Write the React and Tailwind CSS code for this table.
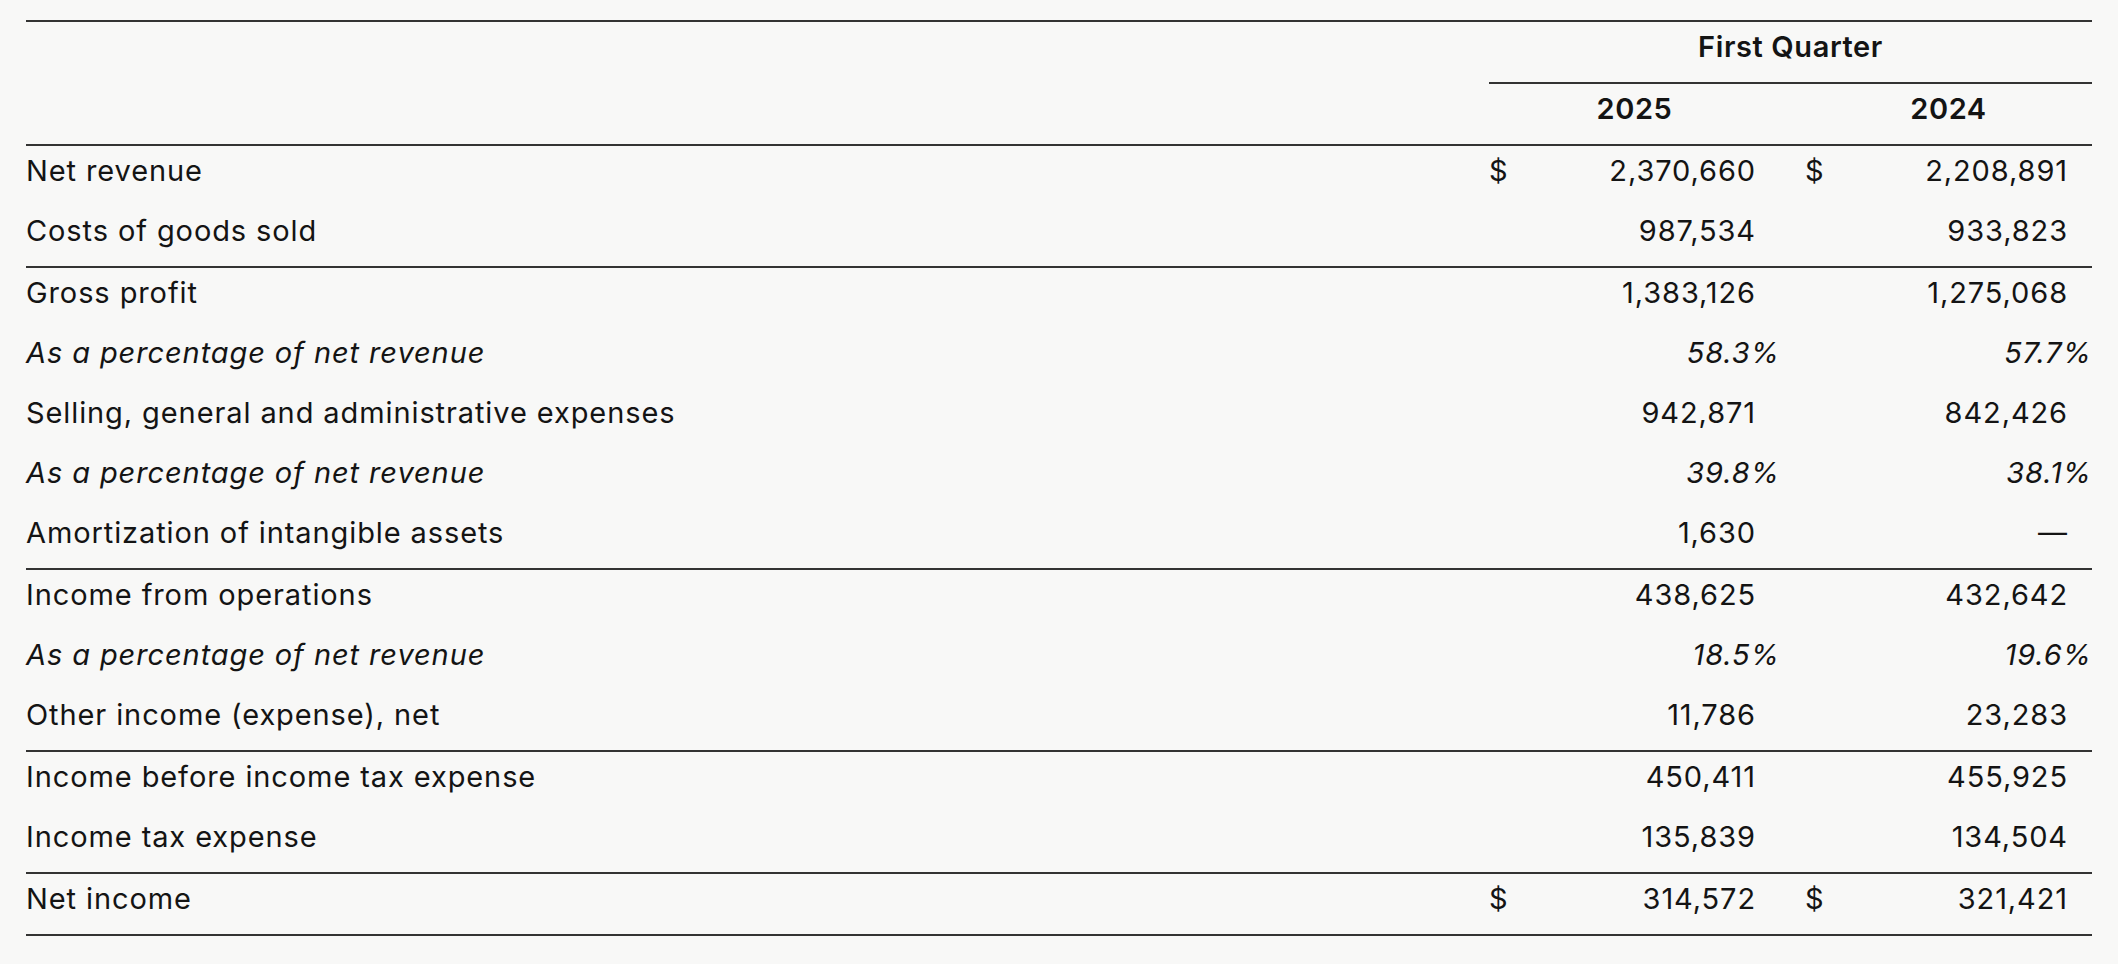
import React from "react";

const rows = [
  { label: "Net revenue", a: "2,370,660", b: "2,208,891", dollar: true },
  { label: "Costs of goods sold", a: "987,534", b: "933,823" },
  { label: "Gross profit", a: "1,383,126", b: "1,275,068", border: true },
  { label: "As a percentage of net revenue", a: "58.3%", b: "57.7%", pct: true },
  { label: "Selling, general and administrative expenses", a: "942,871", b: "842,426" },
  { label: "As a percentage of net revenue", a: "39.8%", b: "38.1%", pct: true },
  { label: "Amortization of intangible assets", a: "1,630", b: "—" },
  { label: "Income from operations", a: "438,625", b: "432,642", border: true },
  { label: "As a percentage of net revenue", a: "18.5%", b: "19.6%", pct: true },
  { label: "Other income (expense), net", a: "11,786", b: "23,283" },
  { label: "Income before income tax expense", a: "450,411", b: "455,925", border: true },
  { label: "Income tax expense", a: "135,839", b: "134,504" },
  { label: "Net income", a: "314,572", b: "321,421", dollar: true, border: true },
];

function ValueCell({ value, dollar, pct, width }) {
  return (
    <div className={`flex items-center ${width}`}>
      <span className="w-[30px]">{dollar ? "$" : ""}</span>
      <span
        className={`flex-1 text-right ${pct ? "italic pr-0" : "pr-[24px]"}`}
      >
        {value}
      </span>
    </div>
  );
}

function Row({ row }) {
  return (
    <div
      className={`flex items-center pb-[11px] ${
        row.border ? "h-[62px] border-t-2 border-[#333]" : "h-[60px]"
      }`}
    >
      <div className={`flex-1 ${row.pct ? "italic" : ""}`}>{row.label}</div>
      <ValueCell value={row.a} dollar={row.dollar} pct={row.pct} width="w-[291px]" />
      <div className="w-[25px]" />
      <ValueCell value={row.b} dollar={row.dollar} pct={row.pct} width="w-[287px]" />
    </div>
  );
}

export default function App() {
  return (
    <div
      className="min-h-screen bg-[#f8f8f7] px-[26px] pt-[20px] text-[29px] tracking-[0.9px] text-[#141414]"
      style={{ fontFamily: "Inter, 'Noto Sans', sans-serif" }}
    >
      <div className="border-t-2 border-[#333]">
        <div className="flex h-[62px]">
          <div className="flex-1" />
          <div className="w-[603px] border-b-2 border-[#333] flex items-center justify-center pb-[11px] font-semibold tracking-[0.6px]">
            First Quarter
          </div>
        </div>
        <div className="flex items-center h-[62px] pb-[11px] border-b-2 border-[#333] font-semibold tracking-[0.6px]">
          <div className="flex-1" />
          <div className="w-[291px] text-center">2025</div>
          <div className="w-[25px]" />
          <div className="w-[287px] text-center">2024</div>
        </div>
        {rows.map((row, i) => (
          <Row key={i} row={row} />
        ))}
        <div className="border-t-2 border-[#333]" />
      </div>
    </div>
  );
}
